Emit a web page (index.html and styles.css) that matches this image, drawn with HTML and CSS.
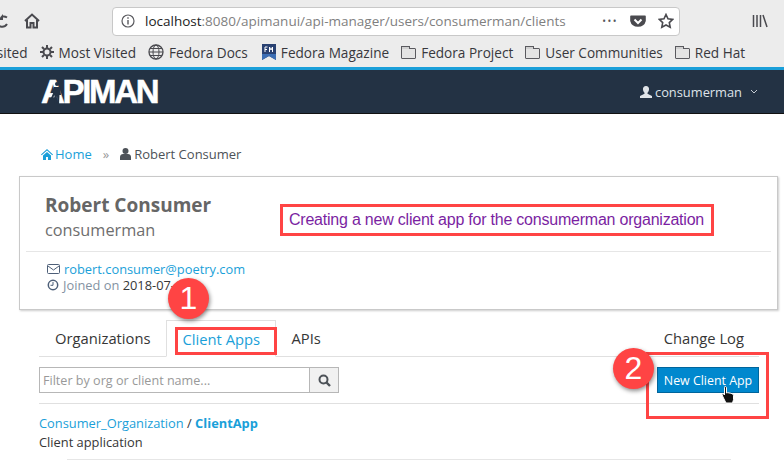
FILE: index.html
```html
<!DOCTYPE html>
<html lang="en">
  <head>
    <meta charset="UTF-8">
    <title>Apiman - Client Apps</title>
    <link rel="stylesheet" href="styles.css">
  </head>
  <body>
    <!-- Browser chrome -->
    <div class="browser">
      <div class="browser-row">
        <svg class="reload-icon" width="14" height="16" viewBox="0 0 14 16"><path d="M-4 8a6 6 0 0 0 11 3M7 4.500a6 6 0 0 0-4-1" fill="none" stroke="#4a4a4f" stroke-width="2"/><path d="M3 1v6h-5z" fill="#4a4a4f"/></svg>
        <svg class="home-icon" width="16" height="16" viewBox="0 0 16 16"><path d="M1 8l7-6.500L15 8M3 7v7.500h3.500V10h3v4.500H13V7" fill="none" stroke="#4a4a4f" stroke-width="2"/></svg>
        <div class="urlbar">
          <svg class="info-icon" width="14" height="14" viewBox="0 0 14 14"><circle cx="7" cy="7" r="6" fill="none" stroke="#5a5a5f" stroke-width="1.200"/><path d="M7 6v4.500M7 3.200v1.600" stroke="#5a5a5f" stroke-width="1.400"/></svg>
          <span class="url"><b>localhost</b>:8080/apimanui/api-manager/users/consumerman/clients</span>
          <span class="url-dots">•••</span>
          <svg width="16" height="15" viewBox="0 0 16 15"><path d="M1 1.500h14a.8.8 0 0 1 .8.8V7a8 7.500 0 0 1-15.600 0V2.300a.8.8 0 0 1 .8-.8z" fill="#4a4a4f"/><path d="M4.500 5.500L8 9l3.500-3.500" fill="none" stroke="#fff" stroke-width="2"/></svg>
          <svg width="16" height="16" viewBox="0 0 16 16"><path d="M8 1.500l2 4.300 4.700.6-3.400 3.200.9 4.700L8 12l-4.200 2.300.9-4.700L1.300 6.400l4.700-.6z" fill="none" stroke="#4a4a4f" stroke-width="1.600"/></svg>
        </div>
        <svg class="library-icon" width="16" height="14" viewBox="0 0 16 14"><path d="M1.500 1v12M5 1v12M8.500 1v12M11 1l4 12" fill="none" stroke="#4a4a4f" stroke-width="1.500"/></svg>
      </div>
      <div class="bookmarks">
        <span class="bookmark cut">Most Visited</span>
        <span class="bookmark">
          <svg width="14" height="14" viewBox="0 0 14 14"><circle cx="7" cy="7" r="3.500" fill="none" stroke="#4a4a4f" stroke-width="2"/><path d="M7 0v3M7 11v3M0 7h3M11 7h3M2 2l2 2M10 10l2 2M2 12l2-2M10 4l2-2" stroke="#4a4a4f" stroke-width="2"/></svg>
          Most Visited
        </span>
        <span class="bookmark">
          <svg width="16" height="16" viewBox="0 0 16 16"><circle cx="8" cy="8" r="7" fill="none" stroke="#4a4a4f" stroke-width="1.300"/><ellipse cx="8" cy="8" rx="3" ry="7" fill="none" stroke="#4a4a4f"/><path d="M1 8h14M2 4.500h12M2 11.500h12" stroke="#4a4a4f"/></svg>
          Fedora Docs
        </span>
        <span class="bookmark magazine">
          <svg width="14" height="16" viewBox="0 0 14 16"><path d="M0 0h14v16l-7-4-7 4z" fill="#294172"/><path d="M0 10h14v6l-7-4-7 4z" fill="#3c6eb4"/><path d="M3 3v5M3 3h2.500M3 5.500h2M7.500 8V3l1.500 3 1.500-3v5" fill="none" stroke="#fff"/></svg>
          Fedora Magazine
        </span>
        <span class="bookmark"><i class="folder"></i>Fedora Project</span>
        <span class="bookmark"><i class="folder"></i>User Communities</span>
        <span class="bookmark"><i class="folder"></i>Red Hat</span>
      </div>
    </div>

    <!-- Apiman nav -->
    <nav class="navbar">
      <span class="logo">APIMAN
        <svg class="logo-man" width="14" height="24" viewBox="0 0 14 24"><circle cx="9" cy="4" r="2" fill="#233244"/><path d="M6 7h6l1 8h-1.500l-.5 9H9.500L9 16l-1 8H6l.5-9-2 4-1.500-1 3-7z" fill="#233244"/></svg>
      </span>
      <span class="nav-user">
        <svg width="12" height="12" viewBox="0 0 12 12"><path d="M6 0a3 3 0 0 1 3 3.500c0 1.500-1 3-1.500 3.300v1L12 10v2H0v-2l4.500-2.200v-1C4 6.500 3 5 3 3.500A3 3 0 0 1 6 0z" fill="#dfe3e8"/></svg>
        consumerman
        <svg class="caret" width="8" height="5" viewBox="0 0 8 5"><path d="M1 1l3 3 3-3" fill="none" stroke="#c5ccd3"/></svg>
      </span>
    </nav>

    <main class="page">
      <div class="breadcrumb">
        <a class="crumb-home">
          <svg width="12" height="11" viewBox="0 0 12 11"><path d="M6 0l6 5.500-.7.800L6 1.500.7 6.300 0 5.500zM2 6.500L6 3l4 3.500V11H7V8H5v3H2z" fill="#1a9fd9"/></svg>Home</a>
        <span class="crumb-sep">»</span>
        <span class="crumb-user">
          <svg width="11" height="12" viewBox="0 0 11 12"><circle cx="5.500" cy="3" r="3" fill="#4d5258"/><path d="M0 12V9c0-2 1.500-3 3-3h5c1.500 0 3 1 3 3v3z" fill="#4d5258"/></svg>
          Robert Consumer
        </span>
      </div>

      <section class="card">
        <div class="card-head">
          <h1>Robert Consumer</h1>
          <div class="username">consumerman</div>
        </div>
        <div class="card-meta">
          <div class="meta-row">
            <svg width="13" height="10" viewBox="0 0 13 10"><rect x=".5" y=".5" width="12" height="9" rx="1" fill="none" stroke="#4d5f78"/><path d="M1 2l5.500 4L12 2" fill="none" stroke="#4d5f78"/></svg>
            <a>robert.consumer@poetry.com</a>
          </div>
          <div class="meta-row muted">
            <svg width="12" height="12" viewBox="0 0 12 12"><circle cx="6" cy="6" r="4.700" fill="none" stroke="#4d5f78" stroke-width="1.500"/><path d="M6 3v3.300H3.500" fill="none" stroke="#4d5f78"/></svg>
            <span>Joined on <span class="date">2018-07-19</span></span>
          </div>
        </div>
        <div class="note">Creating a new client app for the consumerman organization</div>
      </section>

      <div class="tabs">
        <a class="tab">Organizations</a>
        <a class="tab active">Client Apps</a>
        <a class="tab">APIs</a>
        <a class="tab tab-right">Change Log</a>
      </div>

      <div class="filter-row">
        <div class="filter">
          <input class="filter-input" placeholder="Filter by org or client name...">
          <button class="filter-btn">
            <svg width="13" height="13" viewBox="0 0 13 13"><circle cx="5.500" cy="5.500" r="4" fill="none" stroke="#4d5258" stroke-width="2"/><path d="M8.500 8.500l3.500 3.500" stroke="#4d5258" stroke-width="2.400"/></svg>
          </button>
        </div>
        <button class="new-btn">New Client App</button>
      </div>

      <div class="app-row">
        <div><a>Consumer_Organization</a> / <a class="app-name">ClientApp</a></div>
        <div>Client application</div>
      </div>
      <div class="app-rule"></div>
    </main>

    <!-- Annotations on top of the screenshot -->
    <div class="mark mark-tab"></div>
    <div class="mark mark-btn"></div>
    <div class="badge badge-one">1</div>
    <div class="badge badge-two">2</div>
    <svg class="cursor" width="16" height="20" viewBox="0 0 16 20"><path d="M4 1.500c1 0 1.500.5 1.500 1.500v5l1-.3 1.500.2 1.500.3 1.500.5c1 .3 1.500 1 1.500 2v4l-1 3.300H5L2 12 1 9.500c0-1 1.500-1 2-.2l.500.7V3c0-1 0-1.500.5-1.500z" fill="#111" stroke="#fff" stroke-width="1"/></svg>
  </body>
</html>
```

FILE: styles.css
```css
html, body {
    margin: 0;
    height: 467px;
    overflow: hidden;
}
body {
    position: relative;
    font-family: "Open Sans", sans-serif;
    font-size: 12.85px;
    color: #363636;
    background: #fff;
}
a {
    color: #1a9fd9;
    text-decoration: none;
}

/* browser chrome */
.browser {
    position: relative;
    height: 67px;
    background: #ececec;
    border-top: 1px solid transparent;
    box-sizing: border-box;
    overflow: hidden;
}
.browser::before {
    content: "";
    position: absolute;
    left: 139px;
    right: 0;
    top: -1px;
    height: 1px;
    background: #a8a8a8;
}
.browser-row {
    height: 34px;
    display: flex;
    align-items: center;
    padding-top: 6px;
    box-sizing: border-box;
}
.reload-icon {
    flex: none;
}
.home-icon {
    flex: none;
    margin-left: 10px;
}
.urlbar {
    width: 568px;
    height: 29px;
    margin-left: 72px;
    padding: 0 5px 0 8px;
    box-sizing: border-box;
    display: flex;
    align-items: center;
    gap: 12px;
    background: #fff;
    border: 1px solid #c8c8c8;
    border-radius: 4px;
}
.info-icon {
    margin-right: -2px;
}
.url {
    flex: 1;
    font-size: 13.500px;
    color: #7f7f7f;
    white-space: nowrap;
}
.url b {
    font-weight: 400;
    color: #222;
}
.url-dots {
    font-size: 10px;
    color: #55555a;
    letter-spacing: 1.500px;
}
.library-icon {
    margin-left: 72px;
}
.bookmarks {
    height: 33px;
    padding-top: 1px;
    box-sizing: border-box;
    display: flex;
    align-items: center;
    gap: 12px;
    margin-left: -50px;
    font-size: 13.600px;
    color: #38383d;
    white-space: nowrap;
}
.bookmark {
    display: flex;
    align-items: center;
    gap: 5px;
}
.magazine {
    margin-left: 2px;
}
.folder {
    position: relative;
    width: 15px;
    height: 11px;
    margin-top: 2px;
    background: #e4e4e4;
    border: 1px solid #5a5a5f;
    border-radius: 1px;
    box-sizing: border-box;
}
.folder::before {
    content: "";
    position: absolute;
    left: -1px;
    top: -3px;
    width: 7px;
    height: 2px;
    background: #d0d0d0;
    border: 1px solid #5a5a5f;
    border-bottom: none;
}

/* nav */
.navbar {
    height: 47px;
    box-sizing: border-box;
    border-top: 3px solid #1a9fd9;
    border-bottom: 1px solid #111;
    background: #233244;
    display: flex;
    align-items: center;
    justify-content: space-between;
    padding: 0 26px 0 41px;
    color: #dfe3e8;
}
.logo {
    position: relative;
    font-family: "Liberation Sans", sans-serif;
    font-weight: 700;
    font-size: 33px;
    line-height: 33px;
    letter-spacing: -2.300px;
    color: #fff;
    -webkit-text-stroke: .5px #fff;
}
.logo-man {
    position: absolute;
    left: 7px;
    top: 5px;
}
.nav-user {
    display: flex;
    align-items: center;
    gap: 3px;
}
.caret {
    margin-left: 5px;
}

/* page */
.page {
    padding: 31px 6px 0 19px;
}
.breadcrumb {
    height: 18px;
    padding-left: 22px;
    display: flex;
    align-items: center;
    color: #4d5258;
    font-size: 13px;
}
.crumb-home {
    display: flex;
    align-items: center;
    gap: 2px;
}
.crumb-sep {
    margin: 0 11px;
    color: #999;
}
.crumb-user {
    display: flex;
    align-items: center;
    gap: 3px;
}
.card {
    position: relative;
    margin-top: 13px;
    height: 134px;
    box-sizing: border-box;
    border: 1px solid #c9c9c9;
    box-shadow: 1px 1px 2px #ccc;
}
.card-head {
    margin: 0 6px;
    height: 75px;
    box-sizing: border-box;
    padding: 15px 0 0 19px;
    border-bottom: 1px solid #e6e6e6;
}
.card-head h1 {
    margin: 0;
    font-size: 19px;
    line-height: 27px;
    color: #666;
}
.username {
    font-size: 16.300px;
    line-height: 22px;
    color: #6e6e6e;
}
.card-meta {
    padding: 9px 0 0 27px;
    line-height: 16px;
}
.meta-row {
    display: flex;
    align-items: center;
    gap: 4px;
}
.muted {
    color: #8492a2;
}
.date {
    color: #363636;
}
.note {
    position: absolute;
    left: 260px;
    top: 27px;
    width: 434px;
    height: 32px;
    box-sizing: border-box;
    border: 3px solid #ff4444;
    padding: 0 6px;
    font-family: "Liberation Sans", sans-serif;
    font-size: 16px;
    letter-spacing: -.22px;
    line-height: 25px;
    color: #7b1fa2;
    white-space: nowrap;
}

/* tabs */
.tabs {
    margin: 10px 19px 0 20px;
    height: 37px;
    box-sizing: border-box;
    display: flex;
    border-bottom: 1px solid #e0e0e0;
    font-size: 14.750px;
    white-space: nowrap;
}
.tab {
    padding: 8px 15px 0 16px;
    color: #363636;
}
.tab.active {
    width: 110px;
    height: 37px;
    box-sizing: border-box;
    color: #1a9fd9;
    background: #fff;
    border: 1px solid #e0e0e0;
    border-bottom: 1px solid #fff;
}
.tab-right {
    margin-left: auto;
}
.filter-row {
    margin: 10px 19px 0 20px;
    height: 37px;
    box-sizing: border-box;
    display: flex;
    justify-content: space-between;
    border-bottom: 1px solid #e0e0e0;
}
.filter {
    display: flex;
    height: 26px;
}
.filter-input {
    width: 270px;
    box-sizing: border-box;
    padding: 0 3px;
    font-family: inherit;
    font-size: 12.600px;
    color: #363636;
    border: 1px solid #b7b7b7;
    border-right: none;
    outline: none;
}
.filter-input::placeholder {
    color: #999;
}
.filter-btn {
    width: 30px;
    padding: 0;
    display: flex;
    align-items: center;
    justify-content: center;
    background: #f1f1f1;
    border: 1px solid #b7b7b7;
}
.new-btn {
    width: 102px;
    height: 26px;
    padding: 0;
    font-family: inherit;
    font-size: 12.400px;
    color: #fff;
    background: #0088ce;
    border: 1px solid #00659c;
}
.app-row {
    margin: 10px 0 0 20px;
    line-height: 19px;
}
.app-name {
    font-weight: 700;
}
.app-rule {
    margin: 7px 47px 0 48px;
    border-top: 1px solid #e6e6e6;
}

/* annotations */
.mark {
    position: absolute;
    box-sizing: border-box;
    border: 3px solid #ff4444;
}
.mark-tab {
    left: 175px;
    top: 327px;
    width: 102px;
    height: 28px;
}
.mark-btn {
    left: 646px;
    top: 352px;
    width: 123px;
    height: 67px;
}
.badge {
    position: absolute;
    width: 41px;
    height: 41px;
    border-radius: 50%;
    background: #ff4444;
    color: #fff;
    font-family: "Liberation Sans", sans-serif;
    font-size: 32px;
    line-height: 41px;
    text-align: center;
    box-shadow: 1px 2px 4px rgba(0, 0, 0, .45);
}
.badge-one {
    left: 168px;
    top: 278px;
}
.badge-two {
    left: 613px;
    top: 348px;
}
.cursor {
    position: absolute;
    left: 721px;
    top: 385px;
}
```
